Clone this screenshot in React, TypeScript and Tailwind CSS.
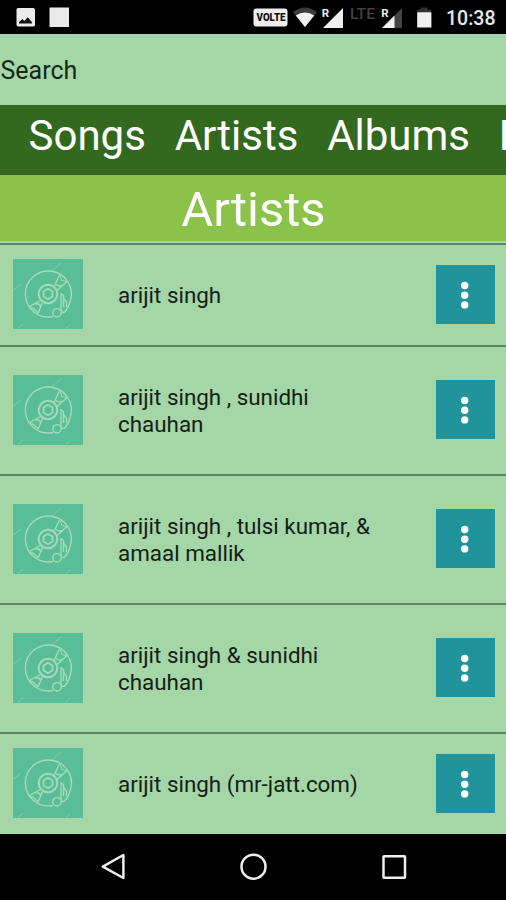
const artists = [
  { lines: ["arijit singh"], height: "h-[102px]" },
  { lines: ["arijit singh , sunidhi", "chauhan"], height: "h-[129px]" },
  { lines: ["arijit singh , tulsi kumar, &", "amaal mallik"], height: "h-[129px]" },
  { lines: ["arijit singh & sunidhi", "chauhan"], height: "h-[129px]" },
  { lines: ["arijit singh (mr-jatt.com)"], height: "h-[102px]" },
];

function StatusBar() {
  return (
    <header className="flex h-[34px] shrink-0 items-center bg-black text-[#e8e8e8]">
      <svg className="ml-4 h-[34px] w-[56px]" viewBox="16 0 56 34">
        <rect x="16.5" y="8" width="18.5" height="18.5" rx="1.8" fill="#eaeaea" />
        <path d="M19 23.5V22l3.3-3 2 2 3.5-3.7 4.2 5v1.2z" fill="#111" />
        <rect x="49.5" y="7.5" width="19.5" height="19.5" fill="#eaeaea" />
      </svg>
      <svg className="ml-auto h-[34px] w-[192px]" viewBox="248 0 192 34">
        <rect x="253.5" y="8.5" width="34" height="18" rx="3" fill="#eee" />
        <text x="256.5" y="21.2" textLength="29" lengthAdjust="spacingAndGlyphs" fontFamily="Roboto, sans-serif" fontSize="10.5" fontWeight="900" fill="#111">VOLTE</text>
        <path d="M293 12.2Q305 2.7 317 12.2L305 27z" fill="#3c3c3c" />
        <path d="M295.8 15.6Q305 9.2 314.2 15.6L305 27z" fill="#f2f2f2" />
        <path d="M323 28L343 8v20z" fill="#eee" />
        <text x="321.8" y="17.3" fontFamily="Roboto, sans-serif" fontSize="11.5" fontWeight="700" fill="#eee" stroke="#000" strokeWidth="2" paintOrder="stroke">R</text>
        <text x="350" y="18.5" textLength="25" lengthAdjust="spacingAndGlyphs" fontFamily="Roboto, sans-serif" fontSize="14.5" fontWeight="500" fill="#414141">LTE</text>
        <path d="M382 28L402 8v20z" fill="#444" />
        <path d="M382 28L394.5 15.5V28z" fill="#f2f2f2" />
        <text x="381.2" y="17.3" fontFamily="Roboto, sans-serif" fontSize="11.5" fontWeight="700" fill="#eee" stroke="#000" strokeWidth="2" paintOrder="stroke">R</text>
        <path d="M417 12.5V9.8h3.5V7.5h7v2.3h3.5v2.7z" fill="#333" />
        <rect x="417.2" y="12.2" width="14.2" height="15.3" rx=".6" fill="#f0f0f0" />
      </svg>
      <span className="ml-[6px] w-[60px] pt-[3px] text-[19.5px] font-medium leading-[34px]">10:38</span>
    </header>
  );
}

function Artwork() {
  return (
    <svg className="ml-[13px] h-[70px] w-[70px] shrink-0" viewBox="0 0 70 70">
      <rect width="70" height="70" fill="#59bd97" />
      <g fill="none" stroke="#a4dcb9" strokeWidth="1.4" strokeLinejoin="round">
        <path d="M57.3 42A23 23 0 1 0 40 57.5" />
        <circle cx="35" cy="35" r="9.3" strokeWidth="2" />
        <path d="M35 29.8L39.5 32.4V37.6L35 40.2L30.5 37.6V32.4z" strokeWidth="1.7" />
        <path d="M41 27.5L46.5 16M44 31.5L54 22.5M43 25.5Q46.5 28 49.5 26.5" />
        <path d="M46.5 16Q49 18.5 48.5 21.5L54 22.5" strokeWidth=".9" />
        <path d="M27.5 41.5L16.5 47.5M29.5 43.5L25 54M16.5 47.5Q17 49.5 20 49L25 54M22.5 45Q26.5 44 28 48" />
        <circle cx="44" cy="53.8" r="4.2" />
        <path d="M48 52V34.5L50.5 36.5V39L53.5 43.5V48M50.5 39V48M57.3 42Q55.5 49.5 51 53.5L48 53" />
        <path d="M39 12L48.5 3.5M0 31.5L8 25M5 69L10 65M53 69L57 66" strokeWidth=".8" opacity=".65" />
      </g>
    </svg>
  );
}

function MoreButton() {
  return (
    <button aria-label="More" className="mr-[11px] h-[59px] w-[59px] shrink-0 bg-[#21949b]">
      <svg className="h-[59px] w-[59px]" viewBox="0 0 59 59" fill="#fff">
        <circle cx="28.7" cy="20.5" r="3.7" />
        <circle cx="28.7" cy="30.2" r="3.7" />
        <circle cx="28.7" cy="39.9" r="3.7" />
      </svg>
    </button>
  );
}

export default function App() {
  return (
    <div className="flex h-[900px] w-[506px] flex-col overflow-hidden bg-[#a5d6a7] font-[Roboto,sans-serif]">
      <StatusBar />
      <div className="flex h-[71px] shrink-0 items-center pl-[0.5px] pt-[2px] text-[25px] text-[#15271a]">Search</div>
      <nav className="flex h-[70px] shrink-0 gap-[28.8px] overflow-hidden whitespace-nowrap bg-[#33691e] pl-[28.5px] text-[42px] leading-[61px] text-white">
        <span>Songs</span>
        <span>Artists</span>
        <span>Albums</span>
        <span>Playlists</span>
      </nav>
      <h1 className="h-[66px] shrink-0 bg-[#8bc34a] pl-px text-center text-[49px] leading-[70px] text-white">Artists</h1>
      <main className="flex min-h-0 grow flex-col overflow-hidden pt-[2px]">
        {artists.map((artist) => (
          <div key={artist.lines[0]} className={"flex shrink-0 items-center border-t-2 border-[#5f8562] pb-[2px] " + artist.height}>
            <Artwork />
            <p className="ml-[35px] grow whitespace-nowrap pt-[2px] text-[22.4px] leading-[26.5px] text-[#132116]">
              {artist.lines.map((line) => (
                <span key={line} className="block">{line}</span>
              ))}
            </p>
            <MoreButton />
          </div>
        ))}
      </main>
      <footer className="h-[66px] shrink-0 bg-black">
        <svg className="h-[66px] w-[506px]" viewBox="0 834 506 66" fill="none" stroke="#eee" strokeWidth="2.5" strokeLinejoin="round">
          <path d="M123.4 855v23L102.8 866.7z" />
          <circle cx="253.5" cy="866.7" r="12" />
          <rect x="383.5" y="856.3" width="21.5" height="21.5" rx=".5" />
        </svg>
      </footer>
    </div>
  );
}
